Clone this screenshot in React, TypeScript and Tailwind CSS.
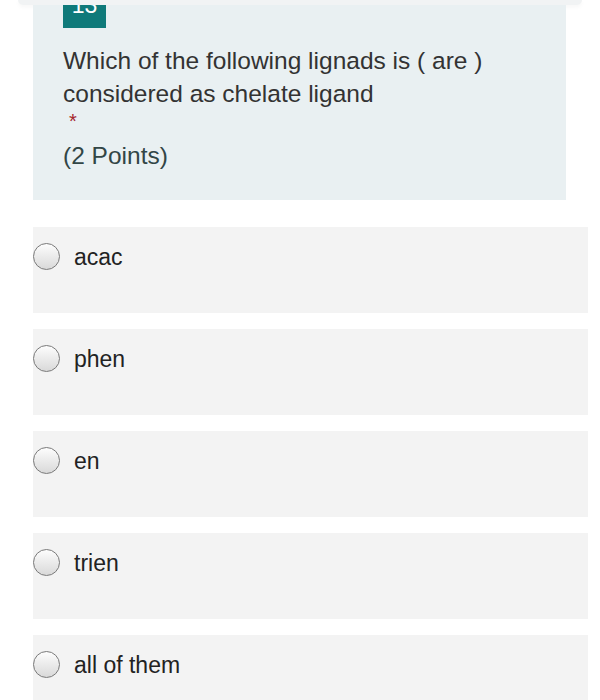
import React, { useState } from "react";

const options = ["acac", "phen", "en", "trien", "all of them"];

const Radio: React.FC<{ checked: boolean }> = ({ checked }) => (
  <span className="flex h-[27px] w-[27px] shrink-0 items-center justify-center rounded-full border-[1.5px] border-[#7a7a7a] bg-gradient-to-b from-[#fdfdfd] to-[#d9d9d9]">
    {checked && <span className="h-[11px] w-[11px] rounded-full bg-[#0f7a7a]" />}
  </span>
);

export default function App() {
  const [selected, setSelected] = useState<number | null>(null);

  return (
    <div
      className="min-h-[700px] w-[600px] overflow-hidden bg-white text-[#333333]"
      style={{ fontFamily: '"Liberation Sans", Arial, sans-serif' }}
    >
      {/* header shadow peeking in from above */}
      <div className="mx-[18px] h-[5px] rounded-b-[10px] bg-[#f1f3f4] shadow-[0_2px_4px_rgba(0,0,0,0.04)]" />

      {/* question card */}
      <div className="ml-[33px] w-[533px] bg-[#e9f0f2] pb-[28px]">
        <div className="ml-[30px] h-[23px] w-[43px] overflow-hidden bg-[#0f7a7a] text-center">
          <span className="-mt-[16px] block text-[23px] leading-[33px] text-white">13</span>
        </div>
        <div className="ml-[30px] mt-[16px] text-[24.5px] leading-[33px] text-[#333333]">
          Which of the following lignads is ( are ) considered as chelate ligand
        </div>
        <div className="ml-[36px] mt-[1px] text-[20px] leading-[20px] text-[#a4262c]">*</div>
        <div className="ml-[30px] mt-[8px] text-[24.5px] leading-[33px] text-[#324646]">
          (2 Points)
        </div>
      </div>

      {/* options */}
      <div className="mt-[27px] ml-[33px] flex w-[555px] flex-col gap-[16px]">
        {options.map((opt, i) => (
          <button
            key={opt}
            type="button"
            onClick={() => setSelected(i)}
            className="flex h-[86px] items-start bg-[#f3f3f3] pt-[15px] text-left"
          >
            <div className="flex h-[28px] items-center">
              <Radio checked={selected === i} />
              <span className="ml-[14px] mt-[2px] text-[23px] leading-[28px] text-[#222222]">{opt}</span>
            </div>
          </button>
        ))}
      </div>
    </div>
  );
}
